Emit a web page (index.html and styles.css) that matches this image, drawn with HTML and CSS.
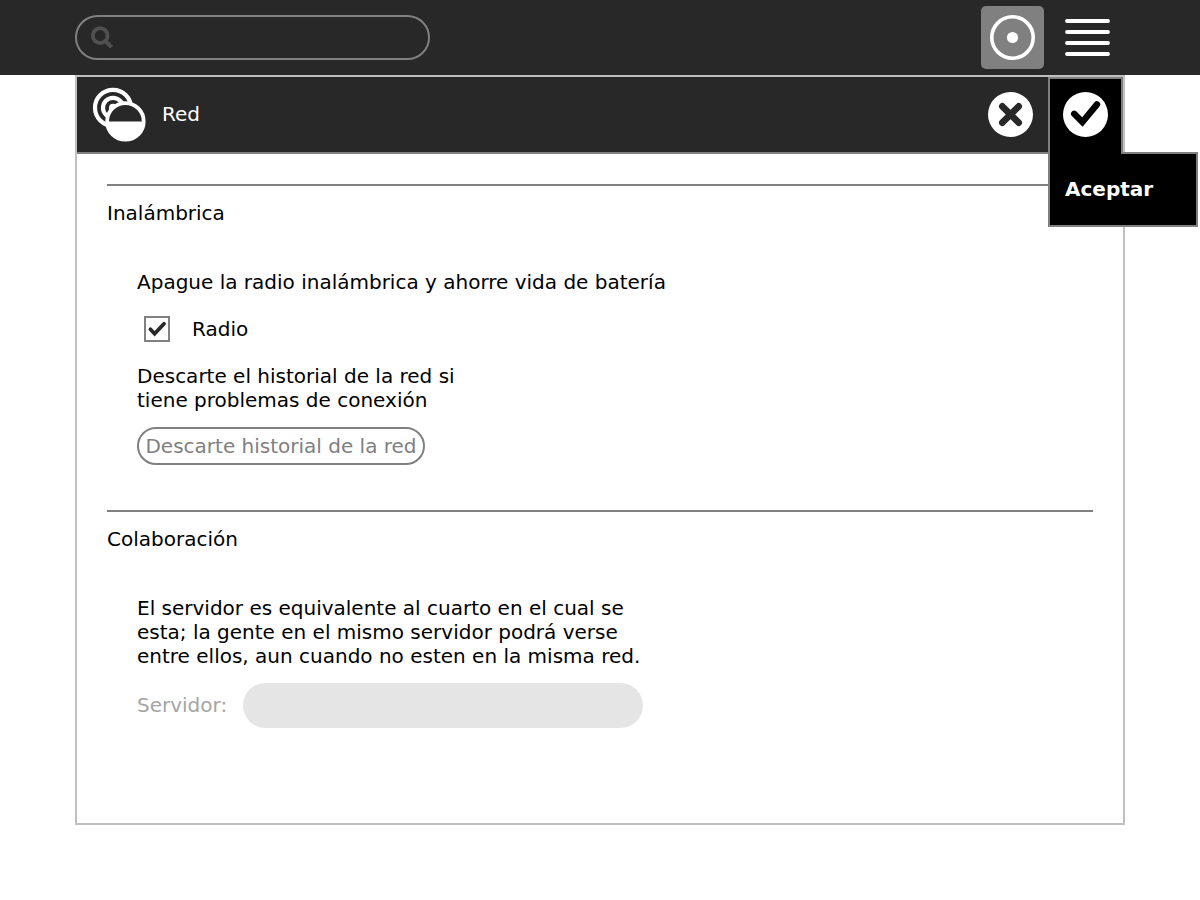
FILE: index.html
```html
<!DOCTYPE html>
<html lang="es">
<head>
<meta charset="utf-8">
<meta name="viewport" content="width=device-width, initial-scale=1">
<title>Red</title>
<link rel="stylesheet" href="styles.css">
</head>
<body class="desktop">
<header class="topbar">
  <label class="search">
    <svg class="search-icon" viewBox="0 0 24 24" aria-hidden="true">
      <circle cx="10.2" cy="9.6" r="7.4" fill="none" stroke="#505050" stroke-width="3.8"/>
      <path d="M15.2 14.8L21.6 21.2" stroke="#505050" stroke-width="4"/>
    </svg>
    <input class="search-input" type="search" aria-label="Buscar">
  </label>
  <div class="views">
    <button class="view view-active" type="button" aria-label="Vista favoritos">
      <svg class="icon" viewBox="0 0 45 45" aria-hidden="true">
        <circle cx="22.5" cy="22.5" r="20.7" fill="none" stroke="#fff" stroke-width="3.6"/>
        <circle cx="22.5" cy="22.5" r="5.6" fill="#fff"/>
      </svg>
    </button>
    <button class="view" type="button" aria-label="Vista de lista">
      <svg class="icon" viewBox="0 0 45 45" aria-hidden="true">
        <path d="M2 6H43M2 17H43M2 28H43M2 39H43" stroke="#fff" stroke-width="3.8" stroke-linecap="round"/>
      </svg>
    </button>
  </div>
</header>

<main class="panel">
  <div class="toolbar">
    <svg class="module-icon" viewBox="0 0 55 55" aria-hidden="true">
      <circle cx="21" cy="20.8" r="18" fill="none" stroke="#fff" stroke-width="4.2"/>
      <circle cx="21" cy="20.8" r="10" fill="none" stroke="#fff" stroke-width="4.2"/>
      <circle cx="21" cy="20.8" r="4" fill="#fff"/>
      <circle cx="33.4" cy="34.4" r="18.3" fill="#282828" stroke="#fff" stroke-width="3.8"/>
      <path d="M15 34.4H52A18.5 18.5 0 0 1 15 34.4Z" fill="#fff"/>
    </svg>
    <h1 class="title">Red</h1>
    <button class="tool" type="button" aria-label="Cancelar">
      <svg class="icon" viewBox="0 0 45 45" aria-hidden="true">
        <circle cx="22.5" cy="22.5" r="22.5" fill="#fff"/>
        <path d="M14.3 14.3L30.7 30.7M30.7 14.3L14.3 30.7" stroke="#282828" stroke-width="6.6" stroke-linecap="round"/>
      </svg>
    </button>
    <div class="accept">
      <button class="tool tool-open" type="button" aria-labelledby="accept-tip">
        <svg class="icon" viewBox="0 0 45 45" aria-hidden="true">
          <circle cx="22.5" cy="22.5" r="22.5" fill="#fff"/>
          <path d="M11.2 21.8L19.4 30L34 12.4" fill="none" stroke="#000" stroke-width="6.4" stroke-linecap="round"/>
        </svg>
      </button>
      <div class="palette" id="accept-tip" role="tooltip">Aceptar</div>
    </div>
  </div>

  <div class="content">
    <section class="section">
      <h2 class="heading">Inalámbrica</h2>
      <div class="body">
        <p class="text">Apague la radio inalámbrica y ahorre vida de batería</p>
        <label class="check-row">
          <input class="check" type="checkbox" checked>
          <span>Radio</span>
        </label>
        <div class="group">
          <p class="text text-narrow">Descarte el historial de la red si tiene problemas de conexión</p>
          <button class="discard" type="button" disabled>Descarte historial de la red</button>
        </div>
      </div>
    </section>
    <section class="section">
      <h2 class="heading">Colaboración</h2>
      <div class="body">
        <div class="group">
          <p class="text text-medium">El servidor es equivalente al cuarto en el cual se esta; la gente en el mismo servidor podrá verse entre ellos, aun cuando no esten en la misma red.</p>
          <div class="server-row">
            <label class="server-label" for="server">Servidor:</label>
            <input class="server-input" id="server" type="text" disabled>
          </div>
        </div>
      </div>
    </section>
  </div>
</main>
</body>
</html>
```

FILE: styles.css
```css
* {
  box-sizing: border-box;
}

.desktop {
  display: flex;
  flex-direction: column;
  min-height: 100vh;
  margin: 0;
  background: #fff;
  color: #000;
  font: 20px/24px "DejaVu Sans", sans-serif;
}

button,
input {
  font: inherit;
}

.topbar {
  display: flex;
  align-items: center;
  justify-content: space-between;
  min-height: 75px;
  padding: 0 81px 0 75px;
  background: #282828;
}

.search {
  display: flex;
  align-items: center;
  gap: 8px;
  width: 355px;
  height: 45px;
  padding: 0 13px;
  border: 2px solid #808080;
  border-radius: 23px;
}

.search-icon {
  flex: none;
  width: 24px;
  height: 24px;
}

.search-input {
  flex: 1;
  min-width: 0;
  border: 0;
  background: none;
  color: #fff;
  outline: none;
}

.views {
  display: flex;
  gap: 12px;
}

.view {
  display: grid;
  place-items: center;
  width: 63px;
  height: 63px;
  padding: 0;
  border: 0;
  border-radius: 5px;
  background: none;
}

.view-active {
  background: #808080;
}

.icon {
  display: block;
  width: 45px;
  height: 45px;
}

.panel {
  flex: 1;
  margin: 0 75px 75px;
  border: 2px solid #c0c0c0;
}

.toolbar {
  display: flex;
  height: 77px;
  align-items: center;
  padding-left: 15px;
  border-bottom: 2px solid #808080;
  background: #282828;
}

.module-icon {
  flex: none;
  width: 55px;
  height: 55px;
}

.title {
  flex: 1;
  margin: 0 15px 2px;
  color: #fff;
  font-size: 20px;
  font-weight: 400;
}

.tool {
  display: grid;
  place-items: center;
  width: 75px;
  height: 75px;
  padding: 0;
  border: 0;
  background: none;
}

.accept {
  position: relative;
  align-self: flex-start;
}

.tool-open {
  position: relative;
  z-index: 2;
  height: 77px;
  padding-bottom: 4px;
  border: 2px solid #808080;
  border-bottom: 0;
  background: #000;
}

.palette {
  position: absolute;
  z-index: 1;
  top: 75px;
  left: 0;
  width: 150px;
  padding: 23px 15px 24px;
  border: 2px solid #808080;
  background: #000;
  color: #fff;
  font-weight: 700;
}

.content {
  display: flex;
  flex-direction: column;
  gap: 45px;
  padding: 30px;
}

.section {
  padding-top: 15px;
  border-top: 2px solid #808080;
}

.heading {
  margin: 0 0 45px;
  font-size: 20px;
  font-weight: 400;
}

.body {
  display: flex;
  flex-direction: column;
  align-items: flex-start;
  gap: 22px;
  padding-left: 30px;
}

.group {
  display: flex;
  flex-direction: column;
  align-items: flex-start;
  gap: 15px;
}

.text {
  margin: 0;
}

.text-narrow {
  max-width: 350px;
}

.text-medium {
  max-width: 520px;
}

.check-row {
  display: flex;
  align-items: center;
  gap: 22px;
  padding-left: 7px;
}

.check {
  appearance: none;
  width: 26px;
  height: 26px;
  margin: 0;
  border: 2px solid #808080;
  background: #fff;
}

.check:checked {
  background: #fff url("data:image/svg+xml,%3Csvg xmlns='http://www.w3.org/2000/svg' viewBox='0 0 22 22'%3E%3Cpath d='M4.4 11.3L8.6 15.8L18 5.8' fill='none' stroke='%23282828' stroke-width='3.8' stroke-linecap='round'/%3E%3C/svg%3E") center / 22px 22px no-repeat;
}

.discard {
  min-width: 288px;
  height: 38px;
  padding: 0 5px;
  border: 2px solid #808080;
  border-radius: 19px;
  background: #fff;
  color: #808080;
}

.server-row {
  display: flex;
  align-items: center;
  gap: 16px;
}

.server-label {
  padding-bottom: 2px;
  color: #a5a5a5;
}

.server-input {
  width: 400px;
  height: 45px;
  padding: 0 15px;
  border: 0;
  border-radius: 23px;
  background: #e5e5e5;
}
```
